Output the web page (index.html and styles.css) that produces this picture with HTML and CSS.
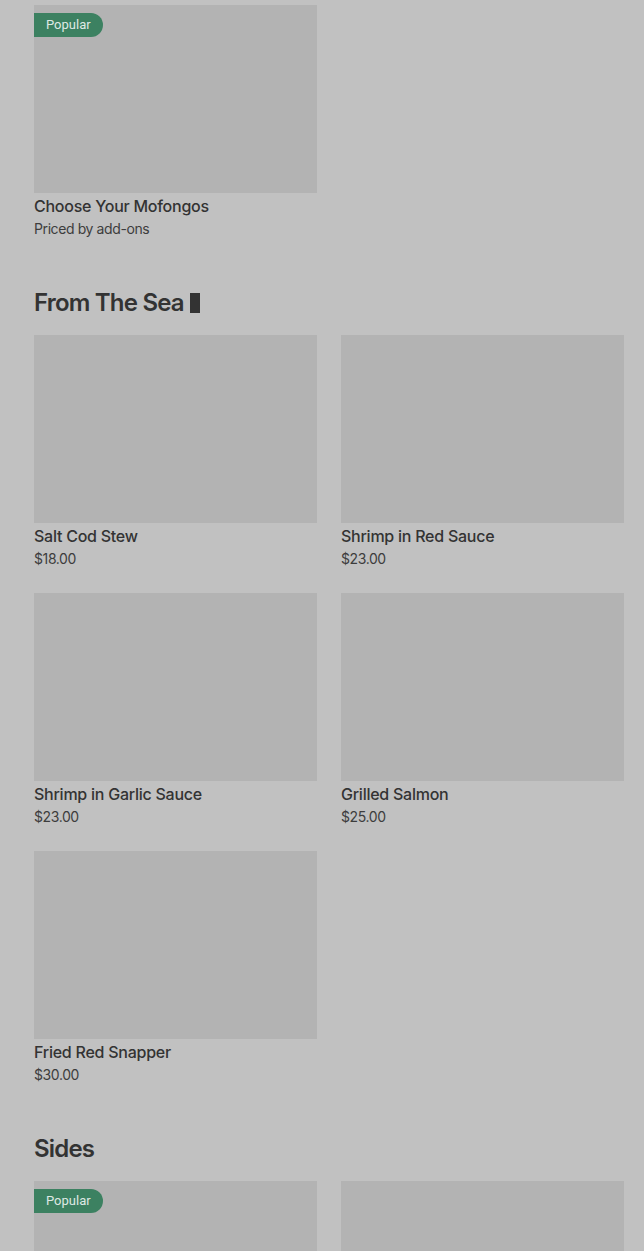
FILE: index.html
```html
<!DOCTYPE html>
<html lang="en">
<head>
  <meta charset="UTF-8">
  <meta name="viewport" content="width=device-width, initial-scale=1.0">
  <title>Menu</title>
  <link rel="stylesheet" href="styles.css">
</head>
<body>
  <div class="menu">
    <!-- Mofongos -->
    <section class="menu-section first">
      <div class="item-grid">
        <div class="item">
          <div class="item-photo"><span class="badge">Popular</span></div>
          <div class="item-name">Choose Your Mofongos</div>
          <div class="item-price">Priced by add-ons</div>
        </div>
      </div>
    </section>

    <!-- From The Sea -->
    <section class="menu-section">
      <h2>From The Sea <span class="caret"></span></h2>
      <div class="item-grid">
        <div class="item">
          <div class="item-photo"></div>
          <div class="item-name">Salt Cod Stew</div>
          <div class="item-price">$18.00</div>
        </div>
        <div class="item">
          <div class="item-photo"></div>
          <div class="item-name">Shrimp in Red Sauce</div>
          <div class="item-price">$23.00</div>
        </div>
        <div class="item">
          <div class="item-photo"></div>
          <div class="item-name">Shrimp in Garlic Sauce</div>
          <div class="item-price">$23.00</div>
        </div>
        <div class="item">
          <div class="item-photo"></div>
          <div class="item-name">Grilled Salmon</div>
          <div class="item-price">$25.00</div>
        </div>
        <div class="item">
          <div class="item-photo"></div>
          <div class="item-name">Fried Red Snapper</div>
          <div class="item-price">$30.00</div>
        </div>
      </div>
    </section>

    <!-- Sides -->
    <section class="menu-section">
      <h2>Sides</h2>
      <div class="item-grid">
        <div class="item">
          <div class="item-photo"><span class="badge">Popular</span></div>
        </div>
        <div class="item">
          <div class="item-photo"></div>
        </div>
      </div>
    </section>
  </div>
</body>
</html>
```
FILE: styles.css
```css
body {
  margin: 0;
  padding: 0;
  background: #c1c1c1;
  font-family: Inter, "Liberation Sans", sans-serif;
  color: #333333;
  overflow: hidden;
}

.menu {
  padding: 5px 20px 0 34px;
}

.menu-section {
  margin-top: 47px;
}

.menu-section.first {
  margin-top: 0;
}

h2 {
  margin: 0 0 16px;
  font-family: Inter, "Liberation Sans", sans-serif;
  font-size: 24px;
  line-height: 33px;
  font-weight: 600;
  letter-spacing: -0.8px;
  color: #333333;
}

.caret {
  display: inline-block;
  width: 10px;
  height: 20px;
  margin-left: 1px;
  background: #333333;
  vertical-align: -2px;
}

.item-grid {
  display: grid;
  grid-template-columns: 283px 283px;
  column-gap: 24px;
  row-gap: 24px;
}

.item-photo {
  position: relative;
  height: 188px;
  background: #b3b3b3;
}

.badge {
  position: absolute;
  top: 8px;
  left: 0;
  height: 24px;
  line-height: 24px;
  padding: 0 12px;
  background: #3c8161;
  color: #dfe9e4;
  font-family: Roboto, "Liberation Sans", sans-serif;
  font-size: 13px;
  border-radius: 0 12px 12px 0;
}

.item-name {
  margin-top: 2px;
  font-size: 16px;
  line-height: 22px;
  font-weight: 500;
  letter-spacing: -0.25px;
  color: #333333;
}

.item-price {
  margin-top: 2px;
  font-size: 14px;
  line-height: 20px;
  letter-spacing: -0.4px;
  color: #3d3d3d;
}
```
